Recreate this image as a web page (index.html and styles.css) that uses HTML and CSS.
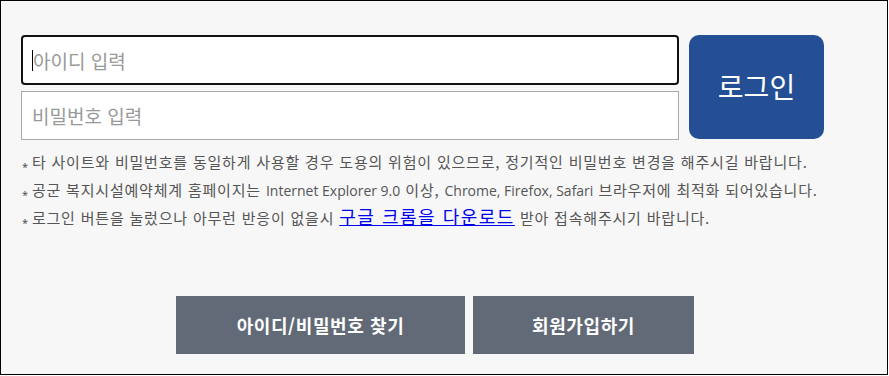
FILE: index.html
```html
<!DOCTYPE html>
<html lang="ko">
<head>
<meta charset="utf-8">
<link rel="stylesheet" href="styles.css">
</head>
<body>
<div class="frame">
  <div class="login-row">
    <div class="fields">
      <div class="field field-focus"><span class="caret"></span><span class="ph">아이디 입력</span></div>
      <div class="field"><span class="ph">비밀번호 입력</span></div>
    </div>
    <button class="login-btn">로그인</button>
  </div>
  <ul class="notes">
    <li><span class="star">*</span>타 사이트와 비밀번호를 동일하게 사용할 경우 도용의 위험이 있으므로, 정기적인 비밀번호 변경을 해주시길 바랍니다.</li>
    <li><span class="star">*</span>공군 복지시설예약체계 홈페이지는 <span class="latin">Internet Explorer 9.0</span> 이상, <span class="latin">Chrome, Firefox, Safari</span> 브라우저에 최적화 되어있습니다.</li>
    <li><span class="star">*</span>로그인 버튼을 눌렀으나 아무런 반응이 없을시 <a class="dl" href="#">구글 크롬을 다운로드</a> 받아 접속해주시기 바랍니다.</li>
  </ul>
  <div class="actions">
    <button class="act act-find">아이디/비밀번호 찾기</button>
    <button class="act act-join">회원가입하기</button>
  </div>
</div>
</body>
</html>
```
FILE: styles.css
```css
html, body {
  margin: 0;
  padding: 0;
  background: #fff;
}
body {
  font-family: "Noto Sans", "Noto Sans CJK KR", sans-serif;
}
.frame {
  box-sizing: border-box;
  width: 888px;
  height: 375px;
  border: 1px solid #000;
  background: #f7f7f7;
  padding: 34px 0 0 20px;
}
.login-row {
  display: flex;
  gap: 10px;
}
.fields {
  display: flex;
  flex-direction: column;
  gap: 6px;
  width: 658px;
}
.field {
  box-sizing: border-box;
  height: 49px;
  background: #fff;
  border: 1px solid #aaa;
  display: flex;
  align-items: center;
  padding-left: 10px;
}
.field-focus {
  height: 50px;
  border: 2px solid #111;
  border-radius: 4px;
  padding-left: 9px;
}
.caret {
  width: 1px;
  height: 21px;
  background: #000;
}
.ph {
  font-family: "Noto Sans CJK KR", sans-serif;
  font-size: 19px;
  color: #999;
  line-height: 1;
}
.login-btn {
  width: 135px;
  height: 104px;
  border: none;
  border-radius: 10px;
  background: #244f94;
  color: #fff;
  font-family: "Noto Sans CJK KR", sans-serif;
  font-size: 28px;
  padding: 0 0 2px 0;
}
.notes {
  list-style: none;
  margin: 8px 0 0 0;
  padding: 0;
  font-family: "Noto Sans CJK KR", sans-serif;
  font-size: 15px;
  letter-spacing: 0.8px;
  color: #555;
}
.notes li {
  white-space: nowrap;
  height: 28px;
  line-height: 28px;
}
.latin {
  font-family: "Open Sans", "Noto Sans", sans-serif;
  font-size: 14px;
  letter-spacing: 0;
  line-height: 1;
}
.star {
  font-family: "Noto Sans", sans-serif;
  font-size: 11px;
  margin-right: 3px;
  padding-left: 1px;
  line-height: 1;
  vertical-align: -3px;
}
.dl {
  color: #0000ee;
  font-size: 18px;
  letter-spacing: 1.5px;
  text-decoration: underline;
  line-height: 1;
}
.actions {
  display: flex;
  gap: 8px;
  margin-top: 64px;
  padding-left: 155px;
}
.act {
  height: 58px;
  border: none;
  background: #616a76;
  color: #fff;
  font-family: "Noto Sans CJK KR", sans-serif;
  font-weight: bold;
  font-size: 18px;
  letter-spacing: 0.6px;
  padding: 0;
}
.act-find { width: 289px; }
.act-join { width: 221px; }
```
